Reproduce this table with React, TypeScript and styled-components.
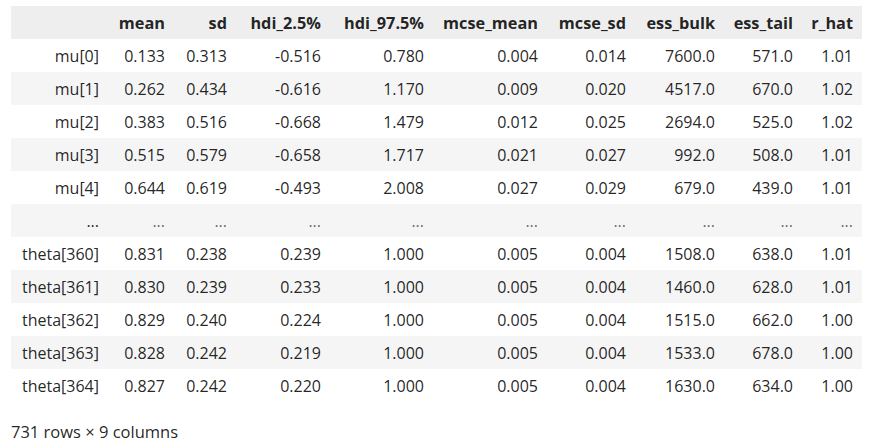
import styled, { createGlobalStyle } from 'styled-components';

const GlobalStyle = createGlobalStyle`
  body {
    margin: 0;
    background: #ffffff;
    font-family: "Open Sans", "Noto Sans", sans-serif;
    color: rgba(0, 0, 0, 0.87);
  }
`;

const columns = ['mean', 'sd', 'hdi_2.5%', 'hdi_97.5%', 'mcse_mean', 'mcse_sd', 'ess_bulk', 'ess_tail', 'r_hat'];
const widths = [97, 66, 62, 94, 103, 114, 88, 89, 78, 60];

const rows: [string, string[]][] = [
  ['mu[0]', ['0.133', '0.313', '-0.516', '0.780', '0.004', '0.014', '7600.0', '571.0', '1.01']],
  ['mu[1]', ['0.262', '0.434', '-0.616', '1.170', '0.009', '0.020', '4517.0', '670.0', '1.02']],
  ['mu[2]', ['0.383', '0.516', '-0.668', '1.479', '0.012', '0.025', '2694.0', '525.0', '1.02']],
  ['mu[3]', ['0.515', '0.579', '-0.658', '1.717', '0.021', '0.027', '992.0', '508.0', '1.01']],
  ['mu[4]', ['0.644', '0.619', '-0.493', '2.008', '0.027', '0.029', '679.0', '439.0', '1.01']],
  ['...', ['...', '...', '...', '...', '...', '...', '...', '...', '...']],
  ['theta[360]', ['0.831', '0.238', '0.239', '1.000', '0.005', '0.004', '1508.0', '638.0', '1.01']],
  ['theta[361]', ['0.830', '0.239', '0.233', '1.000', '0.005', '0.004', '1460.0', '628.0', '1.01']],
  ['theta[362]', ['0.829', '0.240', '0.224', '1.000', '0.005', '0.004', '1515.0', '662.0', '1.00']],
  ['theta[363]', ['0.828', '0.242', '0.219', '1.000', '0.005', '0.004', '1533.0', '678.0', '1.00']],
  ['theta[364]', ['0.827', '0.242', '0.220', '1.000', '0.005', '0.004', '1630.0', '634.0', '1.00']],
];

function App(): JSX.Element {
  return (
    <Output>
      <GlobalStyle />
      <Frame>
        <colgroup>
          {widths.map((w, i) => (
            <col key={`col-${i + 1}`} style={{ width: w }} />
          ))}
        </colgroup>
        <thead>
          <HeadRow>
            <HeadCell />
            {columns.map(c => (
              <HeadCell key={c}>{c}</HeadCell>
            ))}
          </HeadRow>
        </thead>
        <tbody>
          {rows.map(([label, values], i) => (
            <BodyRow key={`row-${i + 1}`} striped={i % 2 === 1}>
              <IndexCell>{label}</IndexCell>
              {values.map((v, j) => (
                <Cell key={`cell-${i + 1}-${j + 1}`} dots={v === '...'}>
                  {v}
                </Cell>
              ))}
            </BodyRow>
          ))}
        </tbody>
      </Frame>
      <Summary>731 rows × 9 columns</Summary>
    </Output>
  );
}

export default App;

const Output = styled.div`
  padding: 6px 0 0 11px;
  width: 851px;
`;

const Frame = styled.table`
  border-collapse: collapse;
  border-spacing: 0;
  table-layout: fixed;
  width: 851px;
  font-size: 16px;
`;

const HeadRow = styled.tr`
  background: #eeeeee;
  height: 33px;
`;

const HeadCell = styled.th`
  padding: 0 9px;
  text-align: right;
  font-weight: 700;
  font-size: 16.3px;
  color: rgba(0, 0, 0, 0.87);
  white-space: nowrap;
`;

const BodyRow = styled.tr<{ striped: boolean }>`
  height: 33px;
  background: ${p => (p.striped ? '#f5f5f5' : '#ffffff')};
`;

const IndexCell = styled.th`
  padding: 0 9px;
  text-align: right;
  font-weight: 400;
  white-space: nowrap;
  color: rgba(0, 0, 0, 0.87);
`;

const Cell = styled.td<{ dots: boolean }>`
  padding: 0 9px;
  text-align: right;
  white-space: nowrap;
  color: ${p => (p.dots ? 'rgba(0, 0, 0, 0.6)' : 'rgba(0, 0, 0, 0.87)')};
`;

const Summary = styled.div`
  margin-top: 20px;
  font-size: 16.5px;
  line-height: 20px;
`;
